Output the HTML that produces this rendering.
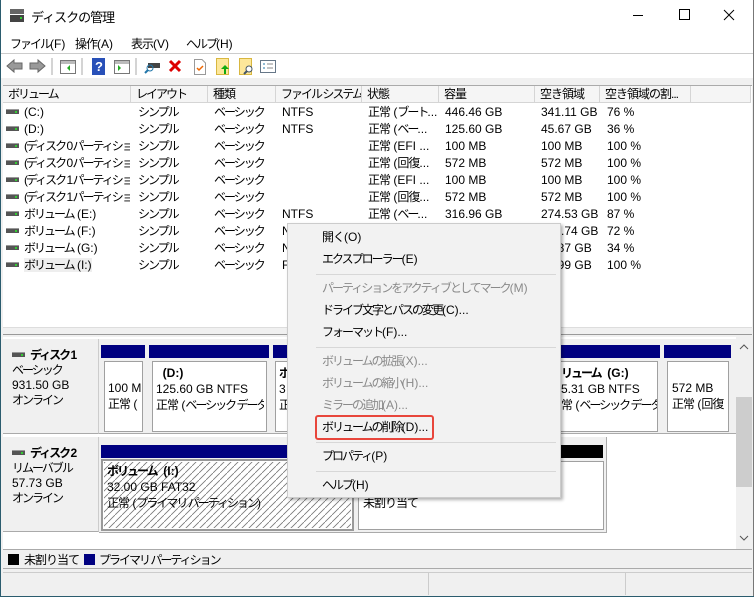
<!DOCTYPE html>
<html><head><meta charset="utf-8">
<style>
*{margin:0;padding:0;box-sizing:border-box}
body{width:754px;height:597px;position:relative;overflow:hidden;background:#f0f0f0;font-family:"Liberation Sans","Noto Sans CJK JP",sans-serif;font-size:12px;color:#000}
.a{position:absolute;white-space:nowrap}
.k{letter-spacing:-2px}
.q{letter-spacing:-1px}
.t{position:absolute;white-space:nowrap;line-height:17px}
.col{position:absolute;white-space:nowrap;overflow:hidden;line-height:17px}
.hd{position:absolute;top:86px;height:17px;border-right:1px solid #d5d5d5;border-bottom:1px solid #d5d5d5;background:#f5f5f5;padding-left:5px;line-height:16px;overflow:hidden;white-space:nowrap}
.bar{position:absolute;background:#000080;height:13px}
.pb{position:absolute;background:#fff;border:1px solid #a0a0a0}
.mi{position:absolute;left:322px;line-height:16px;white-space:nowrap}
.dis{color:#8a8a8a}
.sep{position:absolute;left:316px;width:240px;height:1px;background:#d7d7d7}
.dicon{display:inline-block;width:13px;height:5px;background:#555;border-top:1px solid #999;position:relative;top:-2px;margin-right:5px}
.dicon::after{content:"";position:absolute;right:2px;top:1px;width:2px;height:2px;background:#3c3}
.clip{position:absolute;overflow:hidden;white-space:nowrap}
</style></head><body>
<div class="a" style="left:0;top:0;width:754px;height:53px;background:#fff"></div>
<div class="a" style="left:10px;top:9px;width:14px;height:13px">
 <div class="a" style="left:0;top:0;width:14px;height:5px;background:#666"></div>
 <div class="a" style="left:0;top:6px;width:14px;height:7px;background:#444"></div>
 <div class="a" style="left:10px;top:8px;width:2px;height:2px;background:#3c3"></div>
</div>
<div class="a" style="left:31px;top:7px;font-size:13px"><span class="q">ディスクの管理</span></div>
<div class="a" style="left:633px;top:15px;width:10px;height:1px;background:#000"></div>
<div class="a" style="left:679px;top:9px;width:11px;height:11px;border:1px solid #000"></div>
<svg class="a" style="left:723px;top:9px" width="12" height="12"><path d="M1 1 L11 11 M11 1 L1 11" stroke="#000" stroke-width="1"/></svg>
<div class="a" style="left:10px;top:35px"><span class="k">ファイル</span>(F)</div>
<div class="a" style="left:75px;top:35px"><span class="q">操作</span>(A)</div>
<div class="a" style="left:131px;top:35px"><span class="q">表示</span>(V)</div>
<div class="a" style="left:186px;top:35px"><span class="k">ヘルプ</span>(H)</div>
<div class="a" style="left:0;top:53px;width:754px;height:1px;background:#ccc"></div>
<div class="a" style="left:0;top:54px;width:754px;height:24px;background:#fff"></div>
<svg class="a" style="left:0;top:54px" width="290" height="24">
 <path d="M7 12 L14 6 V9 H22 V15 H14 V18 Z" fill="#999" stroke="#666"/>
 <path d="M45 12 L38 6 V9 H30 V15 H38 V18 Z" fill="#999" stroke="#666"/>
 <line x1="52" y1="4" x2="52" y2="21" stroke="#aaa"/>
 <rect x="60.5" y="6.5" width="15" height="13" fill="#fff" stroke="#777"/><rect x="61" y="7" width="14" height="3" fill="#bbb"/><path d="M70 11 L67 14 L70 17Z" fill="#2a2"/>
 <line x1="82" y1="4" x2="82" y2="21" stroke="#aaa"/>
 <rect x="92" y="4" width="13" height="17" fill="#2850b8"/><text x="95" y="17" fill="#fff" font-size="13" font-weight="bold" font-family="Liberation Sans">?</text>
 <rect x="114.5" y="6.5" width="15" height="13" fill="#fff" stroke="#777"/><rect x="115" y="7" width="14" height="3" fill="#bbb"/><path d="M118 11 L121 14 L118 17Z" fill="#2a2"/>
 <line x1="136" y1="4" x2="136" y2="21" stroke="#aaa"/>
 <rect x="148" y="9" width="12" height="5" fill="#444"/><circle cx="150" cy="14" r="3" fill="none" stroke="#27a"/><line x1="148" y1="16" x2="145" y2="19" stroke="#27a" stroke-width="2"/>
 <path d="M170 7 L180 17 M180 7 L170 17" stroke="#d00" stroke-width="3"/>
 <path d="M194.5 5.5 H202 L205.5 9 V20.5 H194.5Z" fill="#fff" stroke="#999"/><path d="M197 14 L199 16 L203 12" stroke="#e60" fill="none" stroke-width="1.5"/>
 <rect x="216.5" y="4.5" width="12" height="16" fill="#fde79a" stroke="#d8b740"/><path d="M225 11 L221 15 H224 V20 H226 V15 H229Z" fill="#1a1"/>
 <rect x="239.5" y="4.5" width="12" height="16" fill="#fde79a" stroke="#d8b740"/><circle cx="249" cy="15" r="3" fill="#fff" stroke="#456"/><line x1="247" y1="17" x2="244" y2="20" stroke="#456" stroke-width="2"/>
 <rect x="260.5" y="6.5" width="15" height="12" fill="#fff" stroke="#678"/><path d="M263 10 H265 M263 14 H265" stroke="#27a"/><path d="M267 10 H273 M267 14 H273" stroke="#888"/>
</svg>
<div class="a" style="left:0;top:78px;width:754px;height:7px;background:#f0f0f0"></div>
<div class="a" style="left:3px;top:85px;width:749px;height:242px;background:#fff;border-top:1px solid #aaa"></div>
<div class="hd" style="left:3px;width:128px"><span class="k">ボリューム</span></div>
<div class="hd" style="left:131px;width:77px"><span class="k">レイアウト</span></div>
<div class="hd" style="left:208px;width:68px"><span class="q">種類</span></div>
<div class="hd" style="left:276px;width:86px"><span class="k">ファイル システム</span></div>
<div class="hd" style="left:362px;width:77px"><span class="q">状態</span></div>
<div class="hd" style="left:439px;width:96px"><span class="q">容量</span></div>
<div class="hd" style="left:535px;width:65px"><span class="q">空き領域</span></div>
<div class="hd" style="left:600px;width:91px"><span class="q">空き領域の割...</span></div>
<div class="hd" style="left:691px;width:60px"></div>
<div class="col" style="left:6px;top:104px;width:124px">
<span class="dicon"></span>(C:)<br>
<span class="dicon"></span>(D:)<br>
<span class="dicon"></span><span class="k">(ディスク 0 パーティショ...</span><br>
<span class="dicon"></span><span class="k">(ディスク 0 パーティショ...</span><br>
<span class="dicon"></span><span class="k">(ディスク 1 パーティショ...</span><br>
<span class="dicon"></span><span class="k">(ディスク 1 パーティショ...</span><br>
<span class="dicon"></span><span class="k">ボリューム</span> (E:)<br>
<span class="dicon"></span><span class="k">ボリューム</span> (F:)<br>
<span class="dicon"></span><span class="k">ボリューム</span> (G:)<br>
<span class="dicon"></span><span style="background:#eee"><span class="k">ボリューム</span> (I:)</span>
</div>
<div class="col k" style="left:138px;top:104px;width:68px">シンプル<br>シンプル<br>シンプル<br>シンプル<br>シンプル<br>シンプル<br>シンプル<br>シンプル<br>シンプル<br>シンプル</div>
<div class="col k" style="left:214px;top:104px;width:60px">ベーシック<br>ベーシック<br>ベーシック<br>ベーシック<br>ベーシック<br>ベーシック<br>ベーシック<br>ベーシック<br>ベーシック<br>ベーシック</div>
<div class="col" style="left:282px;top:104px;width:78px">NTFS<br>NTFS<br><br><br><br><br>NTFS<br>N<br>N<br>F</div>
<div class="col" style="left:368px;top:104px;width:70px"><span class="q">正常</span> (<span class="k">ブート</span>...<br><span class="q">正常</span> (<span class="k">ベー</span>...<br><span class="q">正常</span> (EFI ...<br><span class="q">正常</span> (<span class="q">回復</span>...<br><span class="q">正常</span> (EFI ...<br><span class="q">正常</span> (<span class="q">回復</span>...<br><span class="q">正常</span> (<span class="k">ベー</span>...</div>
<div class="col" style="left:445px;top:104px;width:88px">446.46 GB<br>125.60 GB<br>100 MB<br>572 MB<br>100 MB<br>572 MB<br>316.96 GB</div>
<div class="col" style="left:541px;top:104px;width:58px">341.11 GB<br>45.67 GB<br>100 MB<br>572 MB<br>100 MB<br>572 MB<br>274.53 GB<br>274.74 GB<br>25.87 GB<br>31.99 GB</div>
<div class="col" style="left:607px;top:104px;width:80px">76 %<br>36 %<br>100 %<br>100 %<br>100 %<br>100 %<br>87 %<br>72 %<br>34 %<br>100 %</div>
<div class="a" style="left:3px;top:327px;width:749px;height:8px;background:#f0f0f0;border-top:1px solid #ddd;border-bottom:1px solid #999"></div>
<div class="a" style="left:3px;top:337px;width:733px;height:212px;background:#fff"></div>
<div class="a" style="left:3px;top:339px;width:96px;height:95px;background:#f0f0f0;border-right:1px solid #ccc;border-bottom:1px solid #aaa"></div>
<div class="a" style="left:3px;top:437px;width:96px;height:95px;background:#f0f0f0;border-right:1px solid #ccc;border-bottom:1px solid #aaa"></div>
<div class="a" style="left:99px;top:339px;width:637px;height:95px;background:#f0f0f0;border-bottom:1px solid #aaa"></div>
<div class="a" style="left:99px;top:437px;width:508px;height:96px;background:#f0f0f0;border-bottom:1px solid #aaa;border-right:1px solid #aaa"></div>
<div class="a" style="left:12px;top:348px;line-height:15px"><span class="dicon"></span><b class="k">ディスク 1</b><br><span class="k">ベーシック</span><br>931.50 GB<br><span class="k">オンライン</span></div>
<div class="a" style="left:12px;top:446px;line-height:15px"><span class="dicon"></span><b class="k">ディスク 2</b><br><span class="k">リムーバブル</span><br>57.73 GB<br><span class="k">オンライン</span></div>
<div class="bar" style="left:101px;top:345px;width:44px"></div>
<div class="bar" style="left:149px;top:345px;width:120px"></div>
<div class="bar" style="left:273px;top:345px;width:20px"></div>
<div class="bar" style="left:555px;top:345px;width:105px"></div>
<div class="bar" style="left:664px;top:345px;width:67px"></div>
<div class="pb" style="left:104px;top:361px;width:39px;height:71px"></div>
<div class="pb" style="left:152px;top:361px;width:115px;height:71px"></div>
<div class="pb" style="left:275px;top:361px;width:20px;height:71px"></div>
<div class="pb" style="left:555px;top:361px;width:103px;height:71px"></div>
<div class="pb" style="left:667px;top:361px;width:62px;height:71px"></div>
<div class="clip" style="left:108px;top:380px;line-height:16px;width:33px">100 M<br><span class="q">正常</span> (</div>
<div class="clip" style="left:156px;top:365px;line-height:16px;width:108px">&nbsp;&nbsp;<b>(D:)</b><br>125.60 GB NTFS<br><span class="q">正常</span> (<span class="k">ベーシック データ</span></div>
<div class="clip" style="left:279px;top:365px;line-height:16px;width:10px"><b>ボ</b><br>3<br>正</div>
<div class="clip" style="left:561px;top:365px;line-height:16px;width:96px"><b><span class="k">リューム</span>&nbsp; (G:)</b><br>5.31 GB NTFS<br><span class="q">常</span> (<span class="k">ベーシック データ</span> /</div>
<div class="clip" style="left:672px;top:380px;line-height:16px;width:56px">572 MB<br><span class="q">正常</span> (<span class="q">回復</span></div>
<div class="bar" style="left:101px;top:445px;width:253px"></div>
<div class="bar" style="left:356px;top:445px;width:247px;background:#000"></div>
<svg class="a" style="left:101px;top:459px" width="253" height="72"><defs><pattern id="h" width="7" height="7" patternUnits="userSpaceOnUse"><path d="M0 7 L7 0" stroke="#777" stroke-width="0.8"/></pattern></defs><rect x="1" y="1" width="251" height="70" fill="#fff" stroke="#999" stroke-width="2"/><rect x="3" y="3" width="247" height="66" fill="url(#h)"/></svg>
<div class="a" style="left:107px;top:463px;line-height:16px"><b><span class="k">ボリューム</span>&nbsp; (I:)</b><br>32.00 GB FAT32<br><span class="q">正常</span> (<span class="k">プライマリ パーティション</span>)</div>
<div class="pb" style="left:358px;top:461px;width:246px;height:69px"></div>
<div class="a" style="left:363px;top:494px"><span class="q">未割り当て</span></div>
<div class="a" style="left:736px;top:337px;width:16px;height:212px;background:#f0f0f0"></div>
<svg class="a" style="left:739px;top:343px" width="10" height="8"><path d="M1 6 L5 2 L9 6" stroke="#555" fill="none"/></svg>
<svg class="a" style="left:739px;top:534px" width="10" height="8"><path d="M1 2 L5 6 L9 2" stroke="#555" fill="none"/></svg>
<div class="a" style="left:736px;top:397px;width:16px;height:90px;background:#cdcdcd"></div>
<div class="a" style="left:3px;top:549px;width:749px;height:20px;background:#f0f0f0;border-top:1px solid #aaa;border-bottom:1px solid #aaa"></div>
<div class="a" style="left:8px;top:554px;width:11px;height:11px;background:#000"></div>
<div class="a" style="left:24px;top:551px"><span class="q">未割り当て</span></div>
<div class="a" style="left:84px;top:554px;width:11px;height:11px;background:#000080"></div>
<div class="a" style="left:99px;top:551px"><span class="k">プライマリ パーティション</span></div>
<div class="a" style="left:3px;top:572px;width:749px;height:23px;border-top:1px solid #ccc"></div>
<div class="a" style="left:428px;top:573px;width:1px;height:22px;background:#ccc"></div>
<div class="a" style="left:625px;top:573px;width:1px;height:22px;background:#ccc"></div>
<div class="a" style="left:0;top:0;width:1px;height:597px;background:#2b5c6e"></div>
<div class="a" style="left:753px;top:0;width:1px;height:597px;background:#777"></div>
<div class="a" style="left:0;top:596px;width:754px;height:1px;background:#2b5c6e"></div>
<div class="a" style="left:287px;top:223px;width:274px;height:275px;background:#f2f2f2;border:1px solid #ccc;box-shadow:2px 2px 3px rgba(0,0,0,.3)"></div>
<div class="mi" style="top:229px"><span class="q">開く</span>(O)</div>
<div class="mi" style="top:251px"><span class="k">エクスプローラー</span>(E)</div>
<div class="sep" style="top:274px"></div>
<div class="mi dis" style="top:280px"><span class="k">パーティションをアクティブとしてマーク</span>(M)</div>
<div class="mi" style="top:302px"><span class="k">ドライブ文字とパスの変更</span>(C)...</div>
<div class="mi" style="top:324px"><span class="k">フォーマット</span>(F)...</div>
<div class="sep" style="top:347px"></div>
<div class="mi dis" style="top:353px"><span class="k">ボリュームの拡張</span>(X)...</div>
<div class="mi dis" style="top:375px"><span class="k">ボリュームの縮小</span>(H)...</div>
<div class="mi dis" style="top:397px"><span class="k">ミラーの追加</span>(A)...</div>
<div class="mi" style="top:419px"><span class="k">ボリュームの削除</span>(D)...</div>
<div class="a" style="left:315px;top:415px;width:119px;height:25px;border:2px solid #e8463c;border-radius:3px"></div>
<div class="sep" style="top:442px"></div>
<div class="mi" style="top:448px"><span class="k">プロパティ</span>(P)</div>
<div class="sep" style="top:471px"></div>
<div class="mi" style="top:477px"><span class="k">ヘルプ</span>(H)</div>
</body></html>
